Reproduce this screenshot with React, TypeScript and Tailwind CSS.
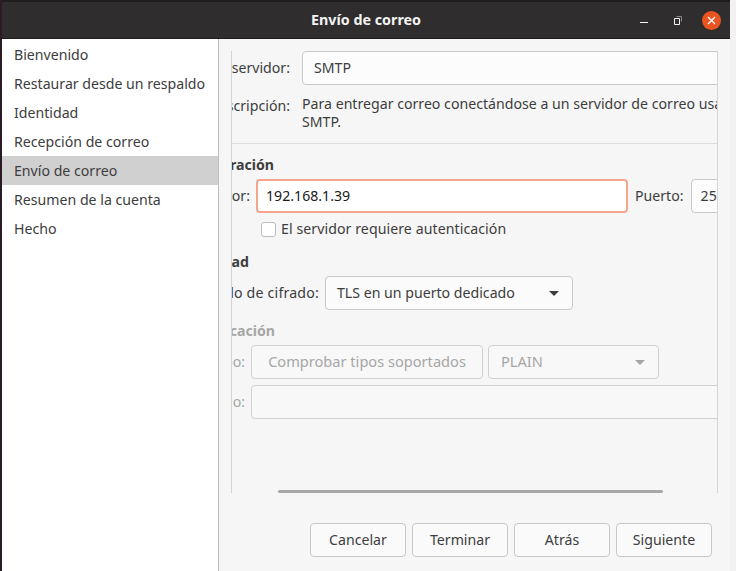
const steps = [
  "Bienvenido",
  "Restaurar desde un respaldo",
  "Identidad",
  "Recepción de correo",
  "Envío de correo",
  "Resumen de la cuenta",
  "Hecho",
]

function Label({ width, text, muted }: { width: string; text: string; muted?: boolean }) {
  return (
    <div className={`${width} flex shrink-0 justify-end overflow-hidden whitespace-nowrap ${muted ? "text-[#a5a7a7]" : ""}`}>
      {text}
    </div>
  )
}

function Caret({ muted }: { muted?: boolean }) {
  return (
    <svg width="10" height="5" viewBox="0 0 10 5" className="shrink-0">
      <path d="M0 0h10L5 5z" fill={muted ? "#a5a7a7" : "#3d3d3d"} />
    </svg>
  )
}

export default function App() {
  return (
    <div className="flex h-[571px] w-[736px] overflow-hidden bg-[#f2f2f2] font-['Noto_Sans',sans-serif] text-[14.15px] text-[#3d3d3d]">
      <div className="w-[2px] shrink-0 bg-[#2c1a26]" />
      <div className="flex w-[728px] shrink-0 flex-col bg-[#f6f6f6]">
        <div className="h-[2px] shrink-0 bg-[#1f1d1d]" />
        <div className="relative flex h-[37px] shrink-0 items-center justify-center border-b border-[#1d1b1b] bg-[#2f2d2d] text-[14.3px] font-bold text-[#f4f4f4]">
          Envío de correo
          <div className="absolute right-[9px] top-[9px] flex items-center">
            <svg width="12" height="12" viewBox="0 0 12 12" className="mr-[23px]">
              <path d="M2 7.5h8" stroke="#f4f4f4" strokeWidth="1" />
            </svg>
            <svg width="10" height="11" viewBox="0 0 10 11" className="mr-[19px]">
              <path d="M1.5 3.5h5v6h-5z" fill="none" stroke="#f4f4f4" />
              <path d="M3.5 1.5h5v5" fill="none" stroke="#8a8a8a" />
            </svg>
            <div className="flex h-[19px] w-[19px] items-center justify-center rounded-full bg-[#e95420]">
              <svg width="9" height="9" viewBox="0 0 9 9">
                <path d="M1 1l7 7M8 1l-7 7" stroke="#fff" strokeWidth="1.4" />
              </svg>
            </div>
          </div>
        </div>
        <div className="flex min-h-0 flex-1">
          <div className="w-[217px] shrink-0 border-r border-[#bdbdbd] bg-white pt-[1px]">
            {steps.map((s) => (
              <div
                key={s}
                className={`flex h-[29px] items-center pl-[12px] ${s === "Envío de correo" ? "bg-[#d0d0d0]" : ""}`}
              >
                {s}
              </div>
            ))}
          </div>
          <div className="flex min-w-0 flex-1 flex-col pl-[12px] pr-[12px] pt-[12px]">
            <div className="relative h-[442px] shrink-0 overflow-hidden border-x border-[#d5d5d5]">
              <div className="flex h-[34px] items-center gap-[12px]">
                <Label width="w-[58px]" text="Tipo de servidor:" />
                <div className="flex h-[34px] w-[440px] shrink-0 items-center rounded-[4px] border border-[#c8c8c8] bg-[#fcfcfc] pl-[11px]">
                  SMTP
                </div>
              </div>
              <div className="flex border-b border-[#dcdcdc] pb-[12px] pt-[10px]">
                <Label width="w-[58px]" text="Descripción:" />
                <div className="ml-[12px] w-[430px] shrink-0 whitespace-nowrap leading-[18px]">
                  Para entregar correo conectándose a un servidor de correo usando
                  <br />
                  SMTP.
                </div>
              </div>
              <div className="mt-[11px] h-[20px] font-bold leading-[20px]">
                <div className="flex w-[42px] justify-end overflow-hidden whitespace-nowrap">Configuración</div>
              </div>
              <div className="mt-[4px] flex h-[34px] items-center gap-[6px]">
                <Label width="w-[18px]" text="Servidor:" />
                <div className="flex h-[34px] w-[372px] shrink-0 items-center rounded-[4px] border-2 border-[#f4a58c] bg-white pl-[8px] text-[#1a1a1a]">
                  192.168.1.39
                </div>
                <span className="ml-[1px] mr-[1px]">Puerto:</span>
                <div className="flex h-[34px] w-[80px] shrink-0 items-center rounded-[4px] border border-[#c8c8c8] bg-[#fcfcfc] pl-[9px]">
                  25
                </div>
              </div>
              <div className="mt-[6px] flex h-[20px] items-center gap-[5px] pl-[29px]">
                <div className="h-[15px] w-[15px] rounded-[3px] border border-[#bcbcbc] bg-white" />
                <span className="tracking-[0.07px]">El servidor requiere autenticación</span>
              </div>
              <div className="mt-[13px] h-[20px] font-bold leading-[20px]">
                <div className="flex w-[17px] justify-end overflow-hidden whitespace-nowrap">Seguridad</div>
              </div>
              <div className="mt-[4px] flex h-[34px] items-center gap-[6px]">
                <div className="flex w-[87px] shrink-0 justify-end overflow-hidden whitespace-nowrap tracking-[0.2px]">
                  Protocolo de cifrado:
                </div>
                <div className="flex h-[34px] w-[248px] items-center justify-between rounded-[4px] border border-[#c8c8c8] bg-[#fbfbfb] pl-[11px] pr-[13px]">
                  TLS en un puerto dedicado
                  <Caret />
                </div>
              </div>
              <div className="mt-[11px] h-[20px] font-bold leading-[20px] text-[#a5a7a7]">
                <div className="flex w-[43px] justify-end overflow-hidden whitespace-nowrap">Autenticación</div>
              </div>
              <div className="mt-[4px] flex h-[34px] items-center text-[#a5a7a7]">
                <Label width="w-[13px]" text="Tipo:" />
                <div className="ml-[6px] flex h-[34px] w-[232px] items-center justify-center rounded-[4px] border border-[#d0d0d0] bg-[#f8f8f8] text-[14.6px]">
                  Comprobar tipos soportados
                </div>
                <div className="ml-[5px] flex h-[34px] w-[171px] items-center justify-between rounded-[4px] border border-[#d0d0d0] bg-[#f8f8f8] pl-[12px] pr-[13px] text-[14.6px]">
                  PLAIN
                  <Caret muted />
                </div>
              </div>
              <div className="mt-[6px] flex h-[34px] items-center gap-[6px] text-[#a5a7a7]">
                <Label width="w-[13px]" text="Nombre de usuario:" />
                <div className="h-[34px] w-[480px] shrink-0 rounded-[4px] border border-[#d0d0d0] bg-[#f8f8f8]" />
              </div>
              <div className="absolute bottom-0 left-[46px] h-[3px] w-[385px] rounded-full bg-[#a8a8a8]" />
            </div>
            <div className="mt-[30px] flex justify-end gap-[6px] pr-[6px]">
              {["Cancelar", "Terminar", "Atrás", "Siguiente"].map((b) => (
                <button
                  key={b}
                  className="flex h-[34px] w-[96px] items-center justify-center rounded-[4px] border border-[#c8c8c8] bg-[#fafafa]"
                >
                  {b}
                </button>
              ))}
            </div>
          </div>
        </div>
      </div>
    </div>
  )
}
